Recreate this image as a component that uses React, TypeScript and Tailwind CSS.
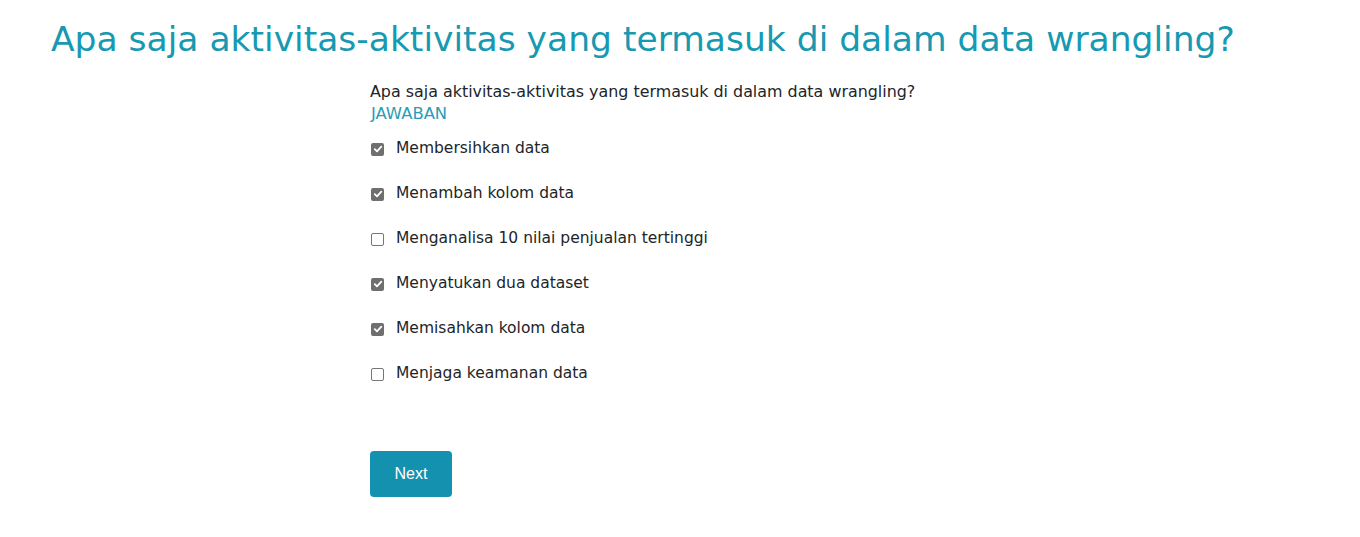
import React from 'react'

const options = [
  { label: 'Membersihkan data', checked: true },
  { label: 'Menambah kolom data', checked: true },
  { label: 'Menganalisa 10 nilai penjualan tertinggi', checked: false },
  { label: 'Menyatukan dua dataset', checked: true },
  { label: 'Memisahkan kolom data', checked: true },
  { label: 'Menjaga keamanan data', checked: false },
]

function Box({ checked }: { checked: boolean }) {
  if (checked) {
    return (
      <span className="flex h-[13px] w-[13px] items-center justify-center rounded-[2px] bg-[#6f6f6f]">
        <svg width="10" height="10" viewBox="0 0 10 10" fill="none">
          <path d="M1.8 5.2 4 7.3 8.3 2.6" stroke="white" strokeWidth="1.8" strokeLinecap="round" strokeLinejoin="round" />
        </svg>
      </span>
    )
  }
  return <span className="h-[13px] w-[13px] rounded-[2px] border border-[#767676] bg-white" />
}

export default function App() {
  return (
    <div className="min-h-screen bg-white text-[#212529]" style={{ fontFamily: '"DejaVu Sans", sans-serif' }}>
      <h1 className="pl-[51px] pt-[17px] text-[34.5px] leading-[44px] text-[#1799b1]">
        Apa saja aktivitas-aktivitas yang termasuk di dalam data wrangling?
      </h1>
      <div className="ml-[370px] mt-[20px]">
        <p className="text-[15.9px] leading-[22px]">
          Apa saja aktivitas-aktivitas yang termasuk di dalam data wrangling?
        </p>
        <p className="pl-px text-[16.4px] leading-[22px] text-[#2a9cb4]">JAWABAN</p>
        <ul className="mt-[13px] flex flex-col gap-[23px]">
          {options.map((o) => (
            <li key={o.label} className="flex h-[22px] items-center gap-[12px] pl-px text-[15.5px]">
              <Box checked={o.checked} />
              <span>{o.label}</span>
            </li>
          ))}
        </ul>
        <button
          className="mt-[66px] h-[46px] w-[82px] rounded-[4px] bg-[#1591b0] text-[16px] text-white"
          style={{ fontFamily: '"Liberation Sans", Arial, sans-serif' }}
        >
          Next
        </button>
      </div>
    </div>
  )
}
